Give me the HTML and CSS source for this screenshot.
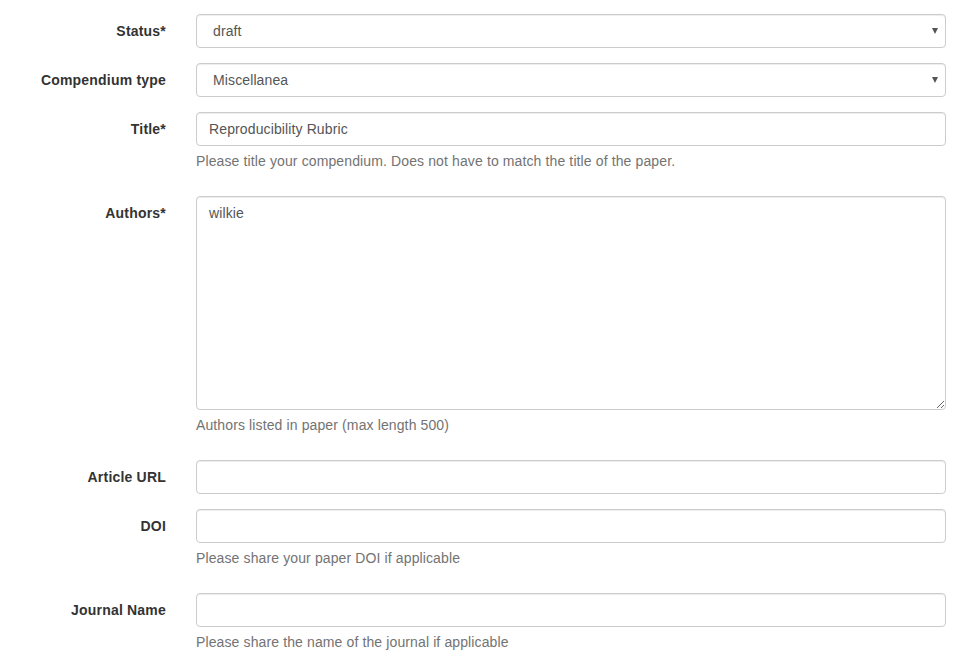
FILE: index.html
```html
<!DOCTYPE html>
<html>
<head>
<meta charset="utf-8">
<link rel="stylesheet" href="styles.css">
</head>
<body>
<form class="form">
  <div class="group">
    <label class="label">Status*</label>
    <div class="field">
      <div class="select-wrap">
        <select class="control select"><option>draft</option></select>
      </div>
    </div>
  </div>
  <div class="group">
    <label class="label">Compendium type</label>
    <div class="field">
      <div class="select-wrap">
        <select class="control select"><option>Miscellanea</option></select>
      </div>
    </div>
  </div>
  <div class="group">
    <label class="label">Title*</label>
    <div class="field">
      <input class="control" type="text" value="Reproducibility Rubric">
      <p class="help">Please title your compendium. Does not have to match the title of the paper.</p>
    </div>
  </div>
  <div class="group">
    <label class="label">Authors*</label>
    <div class="field">
      <textarea class="control textarea" rows="10">wilkie</textarea>
      <p class="help">Authors listed in paper (max length 500)</p>
    </div>
  </div>
  <div class="group">
    <label class="label">Article URL</label>
    <div class="field">
      <input class="control" type="text" value="">
    </div>
  </div>
  <div class="group">
    <label class="label">DOI</label>
    <div class="field">
      <input class="control" type="text" value="">
      <p class="help">Please share your paper DOI if applicable</p>
    </div>
  </div>
  <div class="group">
    <label class="label">Journal Name</label>
    <div class="field">
      <input class="control" type="text" value="">
      <p class="help">Please share the name of the journal if applicable</p>
    </div>
  </div>
</form>
</body>
</html>
```
FILE: styles.css
```css
html, body {
  margin: 0;
  padding: 0;
  background: #fff;
}
body {
  font-family: "Liberation Sans", Arial, Helvetica, sans-serif;
  font-size: 14px;
  line-height: 20px;
  letter-spacing: 0.12px;
  color: #333;
  overflow: hidden;
}
.form {
  padding: 14px 14px 0 25px;
}
.group {
  display: grid;
  grid-template-columns: 156px 1fr;
  margin-bottom: 15px;
}
.label {
  padding: 7px 15px 0 15px;
  text-align: right;
  font-weight: bold;
  color: #333;
  letter-spacing: 0.2px;
}
.field {
  padding: 0 15px;
  min-width: 0;
}
.control {
  display: block;
  box-sizing: border-box;
  width: 100%;
  height: 34px;
  margin: 0;
  padding: 6px 12px;
  font-family: inherit;
  font-size: 14px;
  line-height: 20px;
  letter-spacing: 0.12px;
  color: #555;
  background: #fff;
  border: 1px solid #ccc;
  border-radius: 4px;
  box-shadow: inset 0 1px 1px rgba(0,0,0,.075);
  outline: none;
}
.select-wrap {
  position: relative;
}
.select {
  -webkit-appearance: none;
  appearance: none;
  padding-left: 16px;
}
.select-wrap::after {
  content: "";
  position: absolute;
  right: 8px;
  top: 14px;
  width: 0;
  height: 0;
  border-left: 3.5px solid transparent;
  border-right: 3.5px solid transparent;
  border-top: 6px solid #555;
  pointer-events: none;
}
.textarea {
  height: 214px;
  resize: vertical;
}
.help {
  margin: 5px 0 10px;
  color: #737373;
}
```
